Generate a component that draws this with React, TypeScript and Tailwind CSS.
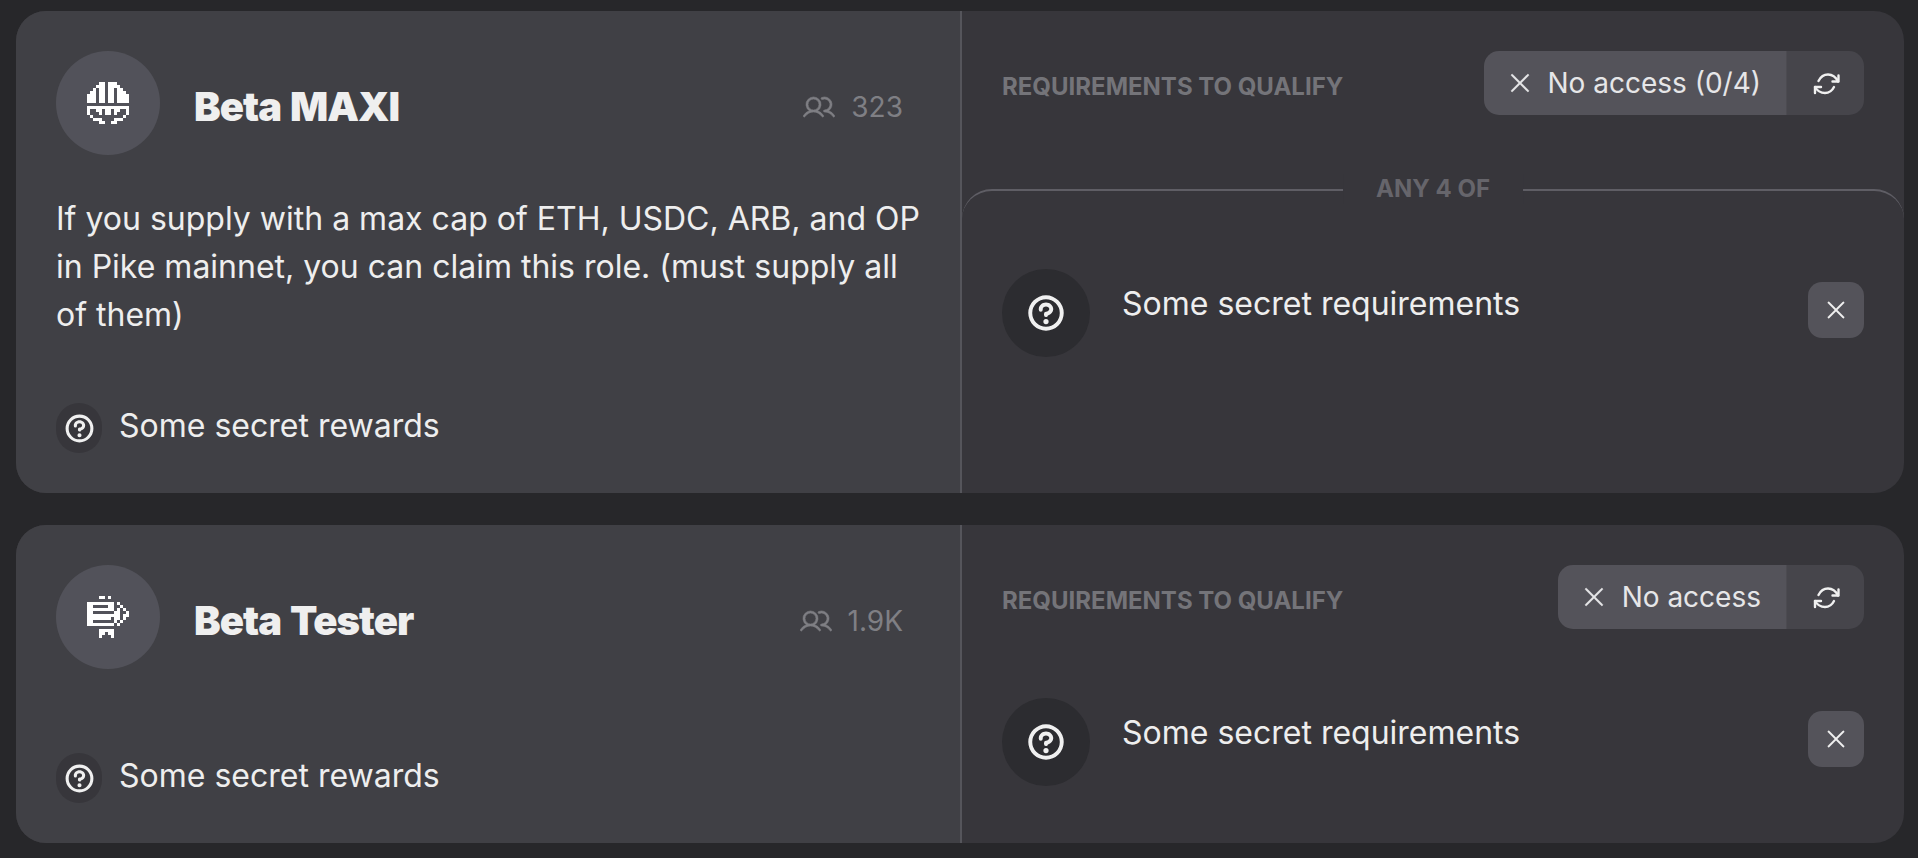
import React from "react";
import { PiQuestionBold, PiUsers, PiX } from "react-icons/pi";

const maxiIcon = [
  "....##.###....",
  "...###.####...",
  "..#.##.##.##..",
  ".##.##.##.###.",
  "###.##.##.####",
  "###.##.##.####",
  "###.##.##.####",
  "..............",
  "##############",
  "#..##.##.##..#",
  "#...#.##.#...#",
  ".#..........#.",
  "..###....###..",
  "....##..##....",
];

const testerIcon = [
  "....##.#......",
  "..............",
  "#########.#...",
  "##.....##..#..",
  "#########.#.#.",
  "##.......##..#",
  "###########.##",
  "########.##.#.",
  "##.......#.#..",
  "#########.#...",
  "..............",
  "....#####.....",
  "....##.##.....",
  "....#...#.....",
];

const PixelIcon = ({ rows }: { rows: string[] }) => (
  <svg width="42" height="42" viewBox="0 0 14 14" shapeRendering="crispEdges" fill="#fff">
    {rows.map((row, y) =>
      row.split("").map((c, x) => (c === "#" ? <rect key={`${x}-${y}`} x={x} y={y} width="1" height="1" /> : null))
    )}
  </svg>
);

const RefreshIcon = () => (
  <svg width="50" height="45" viewBox="0 0 50 45" fill="none" stroke="#f0f0f0" strokeWidth="2.4" strokeLinecap="round" strokeLinejoin="round">
    <path d="M17.5 20C20 15 24 13.5 27 13.5C31 13.5 35 16.5 37 20.5" />
    <path d="M37.5 14.5V20.5H31.5" />
    <path d="M33 26C31 30 27 32 24 32C20 32 16 29.5 14 26" />
    <path d="M14 32V26H20" />
  </svg>
);

const Requirement = () => (
  <div className="flex items-start">
    <div className="flex h-[88px] w-[88px] shrink-0 items-center justify-center rounded-full bg-[#2c2c30]">
      <PiQuestionBold size={42} className="text-[#f0f0f0]" />
    </div>
    <p className="mt-[11px] ml-[32px] flex-1 text-[32px] leading-[48px] text-[#eeeeee]">Some secret requirements</p>
    <div className="mt-[13px] flex h-14 w-14 items-center justify-center rounded-[14px] bg-[#54535a]">
      <PiX size={26} stroke="currentColor" strokeWidth={5} className="text-[#f0f0f0]" />
    </div>
  </div>
);

const AccessPill = ({ label }: { label: string }) => (
  <div className="flex h-16 overflow-hidden rounded-[15px] text-[28px] text-[#e6e6e8]">
    <div className="flex items-center gap-[14px] bg-[#54535a] pr-[25px] pl-[22px]">
      <PiX size={28} stroke="currentColor" strokeWidth={5} />
      <span>{label}</span>
    </div>
    <div className="flex w-[78px] items-center justify-center border-l border-[#4c4b51] bg-[#46454b]">
      <RefreshIcon />
    </div>
  </div>
);

const ReqHeader = ({ label }: { label: string }) => (
  <div className="flex items-center justify-between">
    <h3 className="mt-[8px] text-[24px] font-bold text-[#747479]">REQUIREMENTS TO QUALIFY</h3>
    <AccessPill label={label} />
  </div>
);

const Rewards = () => (
  <div className="mt-auto flex items-start gap-[17px]">
    <div className="flex h-[50px] w-[46px] items-center justify-center rounded-full bg-[#37363b]">
      <PiQuestionBold size={33} className="text-[#f0f0f0]" />
    </div>
    <span className="-mt-px text-[32px] leading-[48px] text-[#eeeeee]">Some secret rewards</span>
  </div>
);

const RoleInfo = ({
  name,
  members,
  icon,
  children,
}: {
  name: string;
  members: string;
  icon: string[];
  children?: React.ReactNode;
}) => (
  <div className="flex w-[946px] shrink-0 flex-col border-r-2 border-[#55555b] bg-[#404045] p-10">
    <div className="flex items-center">
      <div className="flex h-[104px] w-[104px] items-center justify-center rounded-full bg-[#52525a]">
        <PixelIcon rows={icon} />
      </div>
      <h2 className="mt-[7px] ml-[34px] flex-1 text-[40px] font-black tracking-[-1px] text-[#efefef] [word-spacing:2px]">{name}</h2>
      <div className="mt-[7px] mr-[17px] flex items-center gap-[16px] text-[28px] text-[#7f7f84]">
        <PiUsers size={32} stroke="currentColor" strokeWidth={5} />
        <span>{members}</span>
      </div>
    </div>
    {children}
    <Rewards />
  </div>
);

export default function App() {
  return (
    <div className="flex min-h-[858px] flex-col gap-8 bg-[#27272a] pt-[11px] pr-[14px] pb-[15px] pl-4 font-['Inter',sans-serif]">
      <div className="flex h-[482px] overflow-hidden rounded-[30px] bg-[#37363b]">
        <RoleInfo name="Beta MAXI" members="323" icon={maxiIcon}>
          <p className="mt-10 text-[32px] leading-[48px] text-[#eeeeee]">
            If you supply with a max cap of ETH, USDC, ARB, and OP in Pike mainnet, you can claim this role. (must supply
            all of them)
          </p>
        </RoleInfo>
        <div className="flex-1">
          <div className="px-10 pt-10">
            <ReqHeader label="No access (0/4)" />
          </div>
          <div className="relative mt-[74px] rounded-t-[30px] border-t-2 border-[#5f5e65] px-10 pt-[78px]">
            <span className="absolute -top-[17px] left-1/2 -translate-x-1/2 bg-[#37363b] px-[33px] text-[24px] leading-[30px] font-bold whitespace-nowrap text-[#66656b]">
              ANY 4 OF
            </span>
            <Requirement />
          </div>
        </div>
      </div>

      <div className="flex h-[318px] overflow-hidden rounded-[30px] bg-[#37363b]">
        <RoleInfo name="Beta Tester" members="1.9K" icon={testerIcon} />
        <div className="flex-1 px-10 pt-10">
          <ReqHeader label="No access" />
          <div className="mt-[69px]">
            <Requirement />
          </div>
        </div>
      </div>
    </div>
  );
}
